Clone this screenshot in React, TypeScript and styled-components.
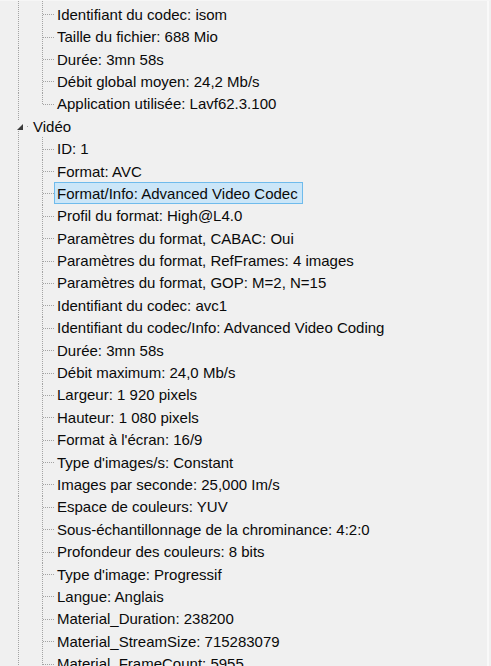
import React from "react";
import styled, { createGlobalStyle, css } from "styled-components";

const Global = createGlobalStyle`
  html, body { margin: 0; padding: 0; background: #f0f0f0; }
  body { font-family: "Liberation Sans", Arial, sans-serif; }
`;

const DOT = "#a3a3a3";

const Viewport = styled.div`
  width: 491px;
  height: 666px;
  overflow: hidden;
  background: #f0f0f0;
  box-sizing: border-box;
  border-top: 1px solid #f6f6f6;
  border-right: 2px solid #f0f0f0;
  box-shadow: inset -2px 0 0 #f9f9f9;
`;

const Tree = styled.div`
  padding-left: 6px;
  display: flex;
  flex-direction: column;
`;

const Row = styled.div<{ $lead?: boolean }>`
  display: flex;
  align-items: center;
  flex: none;
  height: ${({ $lead }) => ($lead ? "2.1px" : "22.4px")};
  font-size: 15px;
  color: #0a0a0a;
  white-space: nowrap;
`;

type GuideKind = "line" | "tee" | "ell" | "blank";

const vline = css`
  content: "";
  position: absolute;
  left: 12px;
  width: 1px;
  background-image: repeating-linear-gradient(to bottom, ${DOT} 0 1px, transparent 1px 2px);
`;

const Guide = styled.span<{ $kind: GuideKind }>`
  position: relative;
  flex: none;
  width: 24px;
  height: 100%;
  ${({ $kind }) =>
    $kind !== "blank" &&
    css`
      &::before {
        ${vline};
        top: 0;
        bottom: ${$kind === "ell" ? "50%" : "0"};
      }
    `}
  ${({ $kind }) =>
    ($kind === "tee" || $kind === "ell") &&
    css`
      &::after {
        content: "";
        position: absolute;
        left: 13px;
        right: 0;
        top: 50%;
        height: 1px;
        background-image: repeating-linear-gradient(to right, ${DOT} 0 1px, transparent 1px 2px);
      }
    `}
`;

const Expander = styled.span`
  position: relative;
  flex: none;
  width: 24px;
  height: 100%;
  display: flex;
  align-items: center;
  padding-left: 11px;
  box-sizing: border-box;
  &::before {
    ${vline};
    top: 0;
    height: calc(50% - 5px);
  }
  &::after {
    ${vline};
    bottom: 0;
    height: calc(50% - 5px);
  }
`;

const Glyph = styled.svg`
  display: block;
  width: 6px;
  height: 6px;
  margin-top: 2px;
`;

const StubDot = styled.span`
  width: 1px;
  height: 1px;
  margin-left: 4px;
  margin-top: 1px;
  background: ${DOT};
`;

const Label = styled.span<{ $selected?: boolean }>`
  display: inline-flex;
  align-items: center;
  box-sizing: border-box;
  height: 22px;
  padding: 0 4px 0 2px;
  border: 1px solid transparent;
  ${({ $selected }) =>
    $selected &&
    css`
      background: #cbe6f8;
      border-color: #6fbbec;
    `}
`;

type Leaf = { text: string; selected?: boolean };

const general: Leaf[] = [
  { text: "Identifiant du codec: isom" },
  { text: "Taille du fichier: 688 Mio" },
  { text: "Durée: 3mn 58s" },
  { text: "Débit global moyen: 24,2 Mb/s" },
  { text: "Application utilisée: Lavf62.3.100" },
];

const video: Leaf[] = [
  { text: "ID: 1" },
  { text: "Format: AVC" },
  { text: "Format/Info: Advanced Video Codec", selected: true },
  { text: "Profil du format: High@L4.0" },
  { text: "Paramètres du format, CABAC: Oui" },
  { text: "Paramètres du format, RefFrames: 4 images" },
  { text: "Paramètres du format, GOP: M=2, N=15" },
  { text: "Identifiant du codec: avc1" },
  { text: "Identifiant du codec/Info: Advanced Video Coding" },
  { text: "Durée: 3mn 58s" },
  { text: "Débit maximum: 24,0 Mb/s" },
  { text: "Largeur: 1 920 pixels" },
  { text: "Hauteur: 1 080 pixels" },
  { text: "Format à l'écran: 16/9" },
  { text: "Type d'images/s: Constant" },
  { text: "Images par seconde: 25,000 Im/s" },
  { text: "Espace de couleurs: YUV" },
  { text: "Sous-échantillonnage de la chrominance: 4:2:0" },
  { text: "Profondeur des couleurs: 8 bits" },
  { text: "Type d'image: Progressif" },
  { text: "Langue: Anglais" },
  { text: "Material_Duration: 238200" },
  { text: "Material_StreamSize: 715283079" },
  { text: "Material_FrameCount: 5955" },
];

function LeafRow({ leaf, last }: { leaf: Leaf; last: boolean }) {
  return (
    <Row>
      <Guide $kind="line" />
      <Guide $kind={last ? "ell" : "tee"} />
      <Label $selected={leaf.selected}>{leaf.text}</Label>
    </Row>
  );
}

export default function App() {
  return (
    <>
      <Global />
      <Viewport>
        <Tree>
          <Row $lead>
            <Guide $kind="line" />
            <Guide $kind="line" />
          </Row>
          {general.map((l, i) => (
            <LeafRow key={"g" + i} leaf={l} last={i === general.length - 1} />
          ))}
          <Row>
            <Expander>
              <Glyph viewBox="0 0 6 6">
                <polygon points="6,0 6,6 0,6" fill="#3a3a3a" />
              </Glyph>
              <StubDot />
            </Expander>
            <Label>Vidéo</Label>
          </Row>
          {video.map((l, i) => (
            <LeafRow key={"v" + i} leaf={l} last={false} />
          ))}
        </Tree>
      </Viewport>
    </>
  );
}
